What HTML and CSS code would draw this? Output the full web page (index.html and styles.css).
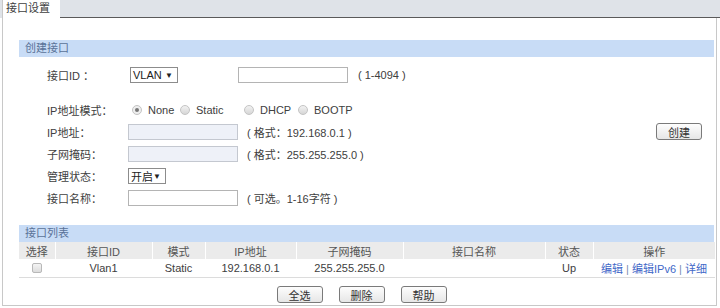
FILE: index.html
```html
<!DOCTYPE html>
<html lang="zh-CN">
<head>
    <meta charset="UTF-8">
    <title>接口设置</title>
    <link rel="stylesheet" href="styles.css">
</head>
<body>
    <div class="tabs">
        <div class="tab">接口设置</div>
        <div class="tab-fill"></div>
    </div>

    <div class="panel">
        <div class="bar">创建接口</div>

        <div class="form">
            <div class="row row-first">
                <span class="label">接口ID ：</span>
                <span class="select select-vlan">VLAN<i>▼</i></span>
                <input type="text" class="text text-id">
                <span class="hint hint-id">( 1-4094 )</span>
            </div>
            <div class="row row-mode">
                <span class="label">IP地址模式：</span>
                <span class="radio-item item-none"><span class="radio checked"></span>None</span>
                <span class="radio-item item-static"><span class="radio"></span>Static</span>
                <span class="radio-item item-dhcp"><span class="radio"></span>DHCP</span>
                <span class="radio-item"><span class="radio"></span>BOOTP</span>
            </div>
            <div class="row">
                <span class="label">IP地址：</span>
                <input type="text" class="text" disabled>
                <span class="hint">( 格式：192.168.0.1 )</span>
                <button type="button" class="btn btn-create">创建</button>
            </div>
            <div class="row">
                <span class="label">子网掩码：</span>
                <input type="text" class="text" disabled>
                <span class="hint">( 格式：255.255.255.0 )</span>
            </div>
            <div class="row">
                <span class="label">管理状态：</span>
                <span class="select select-state">开启<i>▼</i></span>
            </div>
            <div class="row">
                <span class="label">接口名称：</span>
                <input type="text" class="text">
                <span class="hint">( 可选。1-16字符 )</span>
            </div>
        </div>

        <div class="bar bar-list">接口列表</div>

        <table class="list">
            <colgroup>
                <col style="width: 36px">
                <col style="width: 97px">
                <col style="width: 53px">
                <col style="width: 91px">
                <col style="width: 107px">
                <col style="width: 142px">
                <col style="width: 48px">
                <col style="width: 122px">
            </colgroup>
            <thead>
                <tr>
                    <th>选择</th>
                    <th>接口ID</th>
                    <th>模式</th>
                    <th>IP地址</th>
                    <th>子网掩码</th>
                    <th>接口名称</th>
                    <th>状态</th>
                    <th>操作</th>
                </tr>
            </thead>
            <tbody>
                <tr>
                    <td><span class="check"></span></td>
                    <td>Vlan1</td>
                    <td>Static</td>
                    <td>192.168.0.1</td>
                    <td>255.255.255.0</td>
                    <td></td>
                    <td>Up</td>
                    <td class="ops"><a href="#">编辑</a> | <a href="#">编辑IPv6</a> | <a href="#">详细</a></td>
                </tr>
            </tbody>
        </table>

        <div class="actions">
            <button type="button" class="btn">全选</button>
            <button type="button" class="btn">删除</button>
            <button type="button" class="btn">帮助</button>
        </div>
    </div>
</body>
</html>
```

FILE: styles.css
```css
* {
    margin: 0;
    padding: 0;
    box-sizing: border-box;
}

body {
    width: 720px;
    font-family: "Liberation Sans", "Noto Sans CJK SC", sans-serif;
    font-size: 11px;
    color: #404040;
    background: #fff;
}

/* Top tab strip */
.tabs {
    display: flex;
    height: 18px;
    background: #dfe3e8;
}

.tab {
    width: 58px;
    margin-left: 2px;
    padding-left: 3px;
    line-height: 17px;
    background: #fff;
    border-left: 1px solid #c8c8c8;
}

.tab-fill {
    flex: 1;
    border-bottom: 1px solid #5a5a5a;
}

.panel {
    margin: 0 3px 0 2px;
    height: 288px;
    padding: 22px 2px 0 16px;
    border: 1px solid #c8c8c8;
    border-top: none;
}

/* Section header bars */
.bar {
    height: 17px;
    line-height: 17px;
    padding-left: 6px;
    background: #c8dcf6;
    color: #5a7298;
}

.bar-list {
    margin-top: 16px;
}

/* Create form */
.form {
    padding-left: 28px;
}

.row {
    display: flex;
    align-items: center;
    height: 22px;
}

.row-first {
    margin-top: 7px;
    margin-bottom: 13px;
}

.label {
    width: 81px;
}

.select {
    display: flex;
    align-items: center;
    justify-content: space-between;
    height: 16px;
    padding: 0 4px 0 2px;
    border: 1px solid #8c8c8c;
    background: #fff;
    color: #222;
}

.select i {
    font-style: normal;
    font-size: 8px;
}

.select-vlan {
    width: 48px;
    margin-left: 2px;
}

.select-state {
    width: 38px;
}

.text {
    width: 110px;
    height: 16px;
    border: 1px solid #b4b4b4;
    background: #fff;
    font: inherit;
}

.text:disabled {
    background: #eef1f8;
    border-color: #c4c8d0;
}

.text-id {
    margin-left: 60px;
}

.hint {
    margin-left: 9px;
}

.hint-id {
    margin-left: 10px;
}

/* Radio buttons */
.radio-item {
    display: flex;
    align-items: center;
    gap: 6px;
}

.item-none {
    width: 48px;
    margin-left: 4px;
}

.item-static {
    width: 64px;
}

.item-dhcp {
    width: 54px;
}

.radio {
    position: relative;
    width: 10px;
    height: 10px;
    border-radius: 50%;
    border: 1px solid #c4c4c4;
    background: linear-gradient(#f2f2f2, #d6d6d6);
}

.radio.checked {
    background: #eee;
}

.radio.checked::after {
    content: '';
    position: absolute;
    left: 2px;
    top: 2px;
    width: 4px;
    height: 4px;
    border-radius: 50%;
    background: #777;
}

.btn {
    width: 46px;
    height: 17px;
    border: 1px solid #7a7a7a;
    border-radius: 3px;
    background: linear-gradient(#fdfdfd, #e6e6e6);
    font-family: inherit;
    font-size: 11px;
    color: #333;
}

.btn-create {
    margin-left: auto;
    margin-right: 12px;
    position: relative;
    top: -1px;
}

/* Interface list */
.list {
    width: 696px;
    border-collapse: collapse;
    table-layout: fixed;
}

.list th {
    height: 17px;
    font-weight: normal;
    color: #555;
    background: #ebebeb;
    border-left: 1px solid #fff;
}

.list th:first-child {
    border-left: none;
}

.list td {
    height: 18px;
    text-align: center;
    border-bottom: 1px solid #dcdcdc;
}

.check {
    display: inline-block;
    width: 10px;
    height: 10px;
    margin-top: 3px;
    border: 1px solid #b8b8b8;
    border-radius: 2px;
    background: linear-gradient(#f4f4f4, #dcdcdc);
}

.ops {
    color: #7a8ab0;
}

.ops a {
    color: #3f68c8;
    text-decoration: none;
}

.actions {
    display: flex;
    justify-content: center;
    gap: 16px;
    margin-top: 8px;
    padding-right: 10px;
}
```
